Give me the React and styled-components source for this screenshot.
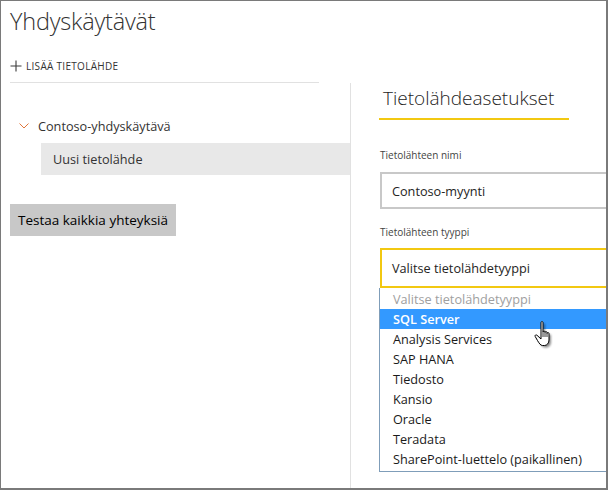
import React from "react";
import styled, { createGlobalStyle } from "styled-components";

const GlobalStyle = createGlobalStyle`
  html, body {
    margin: 0;
    padding: 0;
    background: #ffffff;
  }
  body {
    font-family: "Open Sans", "Noto Sans", "Liberation Sans", sans-serif;
    color: #252423;
  }
`;

const Frame = styled.div`
  width: 608px;
  height: 490px;
  box-sizing: border-box;
  border: 1px solid #7a7a7a;
  border-right-width: 2px;
  border-bottom-width: 2px;
  overflow: hidden;
  display: flex;
  flex-direction: column;
`;

const Header = styled.div`
  margin-left: 9px;
  width: 309px;
  border-bottom: 1px solid #e1e1e1;
`;

const Title = styled.h1`
  margin: 4px 0 0;
  font-size: 23.5px;
  font-weight: 300;
  line-height: 32px;
  color: #333333;
  letter-spacing: -0.2px;
`;

const AddLink = styled.div`
  display: flex;
  align-items: center;
  gap: 4px;
  margin-top: 18px;
  height: 22px;
  margin-bottom: 5px;
  font-size: 10px;
  text-transform: uppercase;
  color: #333333;
  letter-spacing: 0.3px;
`;

const Body = styled.div`
  flex: 1;
  display: flex;
  min-height: 0;
`;

const LeftPane = styled.div`
  width: 349px;
  flex-shrink: 0;
  border-right: 1px solid #e1e1e1;
  display: flex;
  flex-direction: column;
`;

const GatewayRow = styled.div`
  display: flex;
  align-items: center;
  gap: 9px;
  margin-top: 33px;
  padding-left: 18px;
  height: 20px;
  font-size: 12.7px;
  color: #333333;
`;

const SourceRow = styled.div`
  margin-top: 7px;
  margin-left: 40px;
  height: 32px;
  display: flex;
  align-items: center;
  padding-left: 12px;
  background: #e8e8e8;
  font-size: 12.7px;
  color: #333333;
`;

const TestButton = styled.button`
  align-self: flex-start;
  margin: 29px 0 0 9px;
  height: 32px;
  padding: 0 8px;
  border: none;
  background: #c8c8c8;
  font-family: inherit;
  font-size: 13.5px;
  font-weight: 400;
  color: #000000;
  letter-spacing: 0;
`;

const RightPane = styled.div`
  flex: 1;
  padding-left: 28px;
  position: relative;
  overflow: hidden;
`;

const SectionTitle = styled.h2`
  margin: 1px 0 0;
  width: 186px;
  padding: 0 0 0 4px;
  height: 34px;
  line-height: 28px;
  font-size: 19px;
  font-weight: 300;
  color: #252423;
  border-bottom: 2px solid #f2c811;
`;

const FieldLabel = styled.div`
  font-size: 10px;
  color: #444444;
  margin-top: ${({ $top }) => $top}px;
  margin-left: 1px;
  height: 14px;
  line-height: 14px;
`;

const TextBox = styled.div`
  margin-top: ${({ $top }) => $top}px;
  margin-left: 1px;
  width: 260px;
  height: 37px;
  box-sizing: border-box;
  border: 2px solid ${({ $focus }) => ($focus ? "#f2c811" : "#c8c8c8")};
  display: flex;
  align-items: center;
  padding-left: 10px;
  font-size: 12.7px;
  color: #252423;
`;

const SelectBox = styled(TextBox)`
  height: 40px;
`;

const DropList = styled.ul`
  list-style: none;
  margin: 0;
  padding: 1px 0 2px;
  width: 260px;
  box-sizing: border-box;
  border: 1px solid #7f9db9;
  border-top: none;
`;

const Option = styled.li`
  height: 20px;
  line-height: 20px;
  padding-left: 13px;
  font-size: 12.7px;
  color: ${({ $muted, $active }) => ($active ? "#ffffff" : $muted ? "#a0a0a0" : "#1a1a1a")};
  background: ${({ $active }) => ($active ? "#3399ff" : "transparent")};
  font-weight: ${({ $active }) => ($active ? 600 : 400)};
`;

const Cursor = styled.svg`
  position: absolute;
  left: 182px;
  top: 237px;
`;

const options = [
  "SQL Server",
  "Analysis Services",
  "SAP HANA",
  "Tiedosto",
  "Kansio",
  "Oracle",
  "Teradata",
  "SharePoint-luettelo (paikallinen)",
];

const PlusIcon = () => (
  <svg width="12" height="12" viewBox="0 0 12 12">
    <path d="M6 0.5v11M0.5 6h11" stroke="#3a3a3a" strokeWidth="1.1" />
  </svg>
);

const Chevron = () => (
  <svg width="10" height="6" viewBox="0 0 10 6">
    <path d="M0.5 0.5L5 5L9.5 0.5" fill="none" stroke="#e0763c" strokeWidth="1" />
  </svg>
);

const handPath =
  "M8 2.5c0-1.2 2-1.2 2 0V12c0-1.2 2-1.2 2 0v0.5c0-1.2 2-1.2 2 0v1c0-1.2 2-1.2 2 0V20c0 3-2 5.5-4.5 5.5H9.5C7.5 25.5 6 23 4.5 20.5L2.2 16.5c-0.7-1.2 0.8-2.2 1.8-1.2L8 19Z";

const HandCursor = () => (
  <Cursor width="26" height="30" viewBox="0 0 26 30">
    <defs>
      <filter id="sh" x="-30%" y="-30%" width="160%" height="160%">
        <feGaussianBlur stdDeviation="1.2" />
      </filter>
    </defs>
    <path d={handPath} fill="#000" opacity="0.45" transform="translate(2 2)" filter="url(#sh)" />
    <path d={handPath} fill="#fff" stroke="#000" strokeWidth="1" strokeLinejoin="round" />
    <path d="M10 12v5M12 12.5v4.5M14 13.5v3.5" stroke="#000" strokeWidth="0.8" />
  </Cursor>
);

export default function App() {
  return (
    <>
      <GlobalStyle />
      <Frame>
        <Header>
          <Title>Yhdyskäytävät</Title>
          <AddLink>
            <PlusIcon />
            Lisää tietolähde
          </AddLink>
        </Header>
        <Body>
          <LeftPane>
            <GatewayRow>
              <Chevron />
              Contoso-yhdyskäytävä
            </GatewayRow>
            <SourceRow>Uusi tietolähde</SourceRow>
            <TestButton>Testaa kaikkia yhteyksiä</TestButton>
          </LeftPane>
          <RightPane>
            <SectionTitle>Tietolähdeasetukset</SectionTitle>
            <FieldLabel $top={28}>Tietolähteen nimi</FieldLabel>
            <TextBox $top={10}>Contoso-myynti</TextBox>
            <FieldLabel $top={16}>Tietolähteen tyyppi</FieldLabel>
            <SelectBox $top={9} $focus>
              Valitse tietolähdetyyppi
            </SelectBox>
            <DropList>
              <Option $muted>Valitse tietolähdetyyppi</Option>
              {options.map((name, i) => (
                <Option key={name} $active={i === 0}>
                  {name}
                </Option>
              ))}
            </DropList>
            <HandCursor />
          </RightPane>
        </Body>
      </Frame>
    </>
  );
}
